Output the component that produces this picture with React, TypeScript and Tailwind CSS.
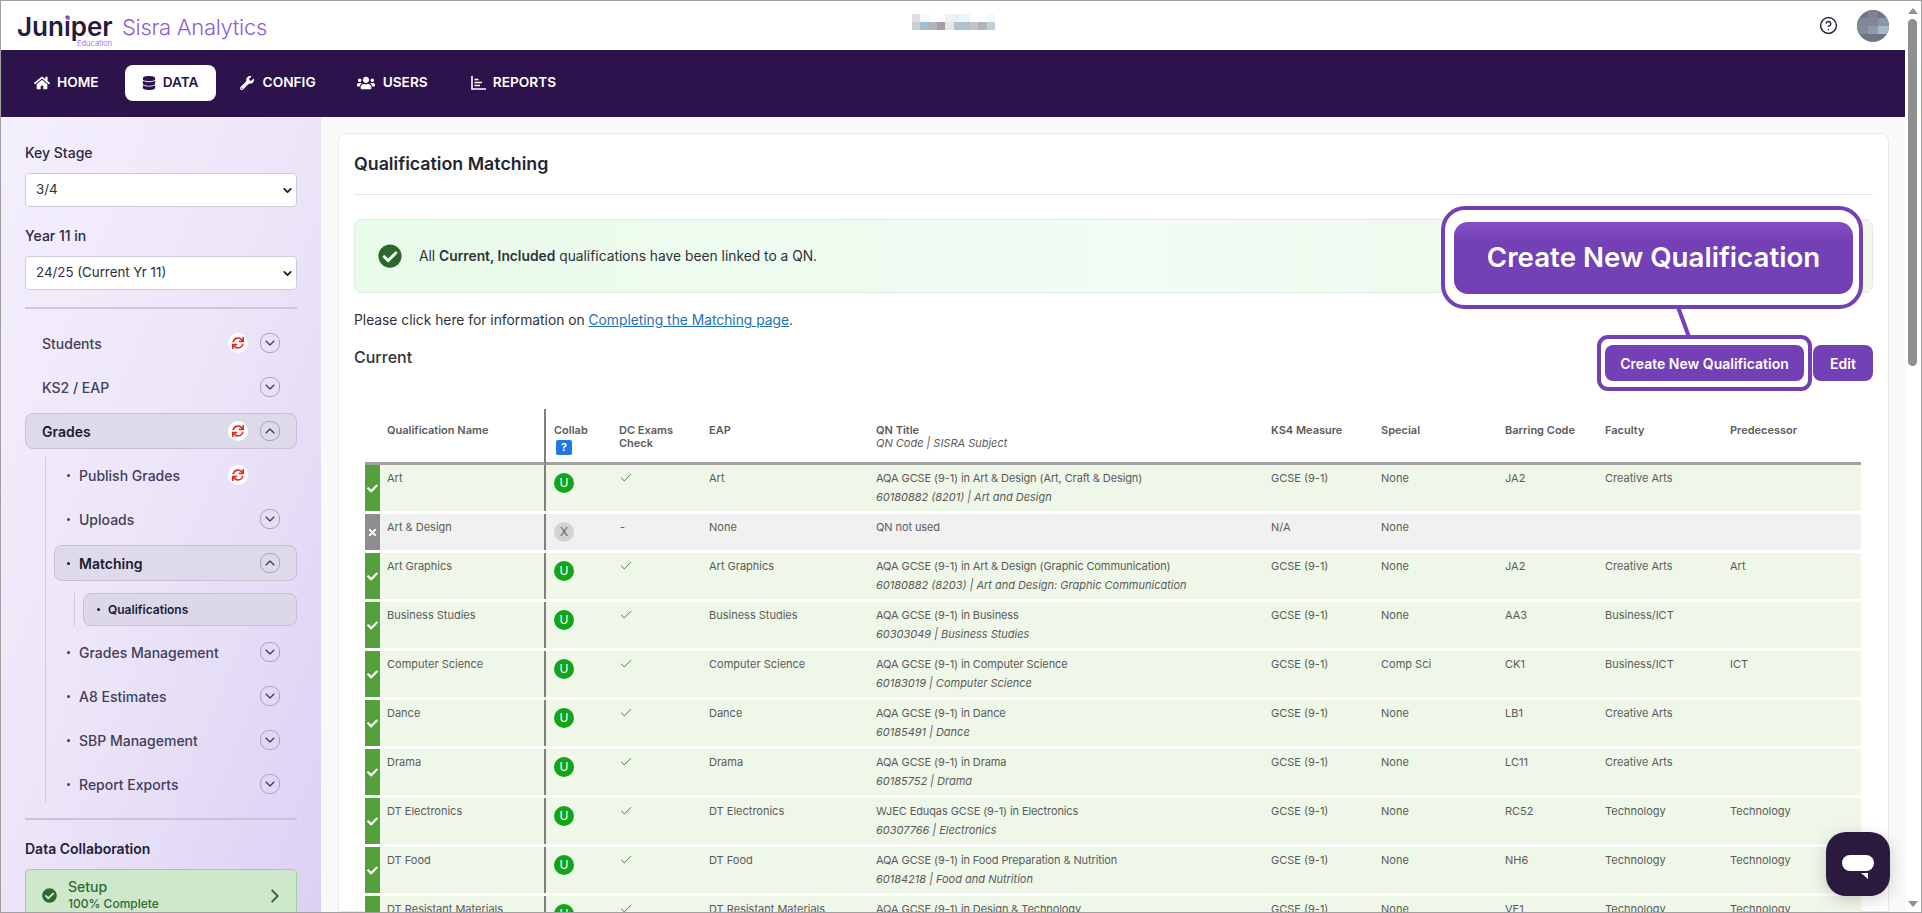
import React from "react";
import { FaHome, FaDatabase, FaWrench, FaUsers, FaSync, FaCheckCircle, FaCheck, FaTimes } from "react-icons/fa";
import { ChevronDown, ChevronUp, ChevronRight, CircleHelp, Check } from "lucide-react";

type RowData = { name: string; st: "U" | "X"; eap: string; t1: string; t2?: string; m: string; sp: string; bar?: string; fac?: string; pre?: string };

const rows: RowData[] = [
  { name: "Art", st: "U", eap: "Art", t1: "AQA GCSE (9-1) in Art & Design (Art, Craft & Design)", t2: "60180882 (8201) | Art and Design", m: "GCSE (9-1)", sp: "None", bar: "JA2", fac: "Creative Arts" },
  { name: "Art & Design", st: "X", eap: "None", t1: "QN not used", m: "N/A", sp: "None" },
  { name: "Art Graphics", st: "U", eap: "Art Graphics", t1: "AQA GCSE (9-1) in Art & Design (Graphic Communication)", t2: "60180882 (8203) | Art and Design: Graphic Communication", m: "GCSE (9-1)", sp: "None", bar: "JA2", fac: "Creative Arts", pre: "Art" },
  { name: "Business Studies", st: "U", eap: "Business Studies", t1: "AQA GCSE (9-1) in Business", t2: "60303049 | Business Studies", m: "GCSE (9-1)", sp: "None", bar: "AA3", fac: "Business/ICT" },
  { name: "Computer Science", st: "U", eap: "Computer Science", t1: "AQA GCSE (9-1) in Computer Science", t2: "60183019 | Computer Science", m: "GCSE (9-1)", sp: "Comp Sci", bar: "CK1", fac: "Business/ICT", pre: "ICT" },
  { name: "Dance", st: "U", eap: "Dance", t1: "AQA GCSE (9-1) in Dance", t2: "60185491 | Dance", m: "GCSE (9-1)", sp: "None", bar: "LB1", fac: "Creative Arts" },
  { name: "Drama", st: "U", eap: "Drama", t1: "AQA GCSE (9-1) in Drama", t2: "60185752 | Drama", m: "GCSE (9-1)", sp: "None", bar: "LC11", fac: "Creative Arts" },
  { name: "DT Electronics", st: "U", eap: "DT Electronics", t1: "WJEC Eduqas GCSE (9-1) in Electronics", t2: "60307766 | Electronics", m: "GCSE (9-1)", sp: "None", bar: "RC52", fac: "Technology", pre: "Technology" },
  { name: "DT Food", st: "U", eap: "DT Food", t1: "AQA GCSE (9-1) in Food Preparation & Nutrition", t2: "60184218 | Food and Nutrition", m: "GCSE (9-1)", sp: "None", bar: "NH6", fac: "Technology", pre: "Technology" },
  { name: "DT Resistant Materials", st: "U", eap: "DT Resistant Materials", t1: "AQA GCSE (9-1) in Design & Technology", m: "GCSE (9-1)", sp: "None", bar: "VE1", fac: "Technology", pre: "Technology" },
];

function Sync() {
  return (
    <span className="flex h-5 w-5 items-center justify-center rounded-full bg-white">
      <FaSync className="text-[12px] text-[#e02b20]" />
    </span>
  );
}

function Toggle({ up }: { up?: boolean }) {
  return (
    <span className="flex h-5 w-5 items-center justify-center rounded-[9px] border border-[#aaa4be] text-[#33314a]">
      {up ? <ChevronUp size={16} strokeWidth={1.6} /> : <ChevronDown size={16} strokeWidth={1.6} />}
    </span>
  );
}

function SideRow({ label, bullet, sync, toggle, active, up }: { label: string; bullet?: boolean; sync?: boolean; toggle?: boolean; active?: boolean; up?: boolean }) {
  return (
    <div className={`flex h-9 items-center rounded-lg border pr-[16px] ${bullet ? "pl-[12px]" : "pl-[16px]"} ${active ? "border-[#c6c1d6] bg-[#dfdaea] font-semibold text-[#1d1b34]" : "border-transparent font-medium text-[#41405a]"}`}>
      {bullet && <span className="mr-[9px] h-[3px] w-[3px] rounded-full bg-current" />}
      <span className="text-[14px]">{label}</span>
      <span className="ml-auto flex items-center gap-3">
        {sync && <Sync />}
        {toggle ? <Toggle up={up} /> : <span className="h-5 w-5" />}
      </span>
    </div>
  );
}

function Select({ value }: { value: string }) {
  return (
    <div className="mt-[11px] flex h-[34px] items-center justify-between rounded border border-[#cfcbdc] bg-white pl-[10px] pr-[2px] text-[13.3px] text-[#2f2f3a]">
      <span>{value}</span>
      <ChevronDown size={13} strokeWidth={3.4} className="text-[#222]" />
    </div>
  );
}

function Sidebar() {
  return (
    <aside className="h-full w-[320px] shrink-0 overflow-hidden bg-gradient-to-br from-[#f4effd] via-[#ece5f8] to-[#dcd0f4] px-6 pt-[27px]">
      <div className="text-[14px] font-medium leading-[18px] text-[#2b2a40]">Key Stage</div>
      <Select value="3/4" />
      <div className="mt-[20px] text-[14px] font-medium leading-[18px] text-[#2b2a40]">Year 11 in</div>
      <Select value="24/25 (Current Yr 11)" />
      <div className="mt-[17px] h-[2px] bg-[#cdc8da]" />
      <div className="mt-[16px] flex flex-col gap-2">
        <SideRow label="Students" sync toggle />
        <SideRow label="KS2 / EAP" toggle />
        <SideRow label="Grades" sync toggle active up />
      </div>
      <div className="ml-[20px] mt-2 flex flex-col gap-2 border-l border-[#cfcbdc] pl-[8px]">
        <SideRow label="Publish Grades" bullet sync />
        <SideRow label="Uploads" bullet toggle />
        <SideRow label="Matching" bullet toggle active up />
        <div className="ml-[20px] mt-[4px] border-l border-[#cfcbdc] pl-[8px]">
          <div className="flex h-[33px] items-center rounded-lg border border-[#c6c1d6] bg-[#dcd8e9] pl-[13px] text-[12px] font-semibold text-[#1d1b34]">
            <span className="mr-[8px] h-[3px] w-[3px] rounded-full bg-current" />
            Qualifications
          </div>
        </div>
        <SideRow label="Grades Management" bullet toggle />
        <SideRow label="A8 Estimates" bullet toggle />
        <SideRow label="SBP Management" bullet toggle />
        <SideRow label="Report Exports" bullet toggle />
      </div>
      <div className="mt-[16px] h-[2px] bg-[#c9c3d8]" />
      <div className="mt-[20px] text-[14px] font-semibold leading-[18px] text-[#23223a]">Data Collaboration</div>
      <div className="mt-[11px] flex h-[60px] items-start rounded border border-[#9fd09c] bg-[#cfe8cb] pl-[16px] pr-[10px] pt-[8px] text-[#2e6b30]">
        <FaCheckCircle className="mt-[10px] text-[15px]" />
        <div className="ml-[11px] leading-none">
          <div className="text-[14px] font-medium leading-[18px]">Setup</div>
          <div className="text-[12px] font-medium leading-[16px]">100% Complete</div>
        </div>
        <ChevronRight size={22} strokeWidth={2} className="ml-auto mt-[7px]" />
      </div>
    </aside>
  );
}

function NavItem({ icon, label, active, gap }: { icon: React.ReactNode; label: string; active?: boolean; gap: string }) {
  return (
    <div className={`flex h-9 items-center ${gap} rounded-lg px-[17px] text-[13.7px] font-semibold ${active ? "bg-white text-[#2c134c]" : "text-white"}`}>
      {icon}
      {label}
    </div>
  );
}

function Logo() {
  return (
    <div className="flex items-start pl-4 pt-[2px]">
      <div className="relative w-[98px]">
        <span className="text-[26px] font-semibold leading-[36px] text-[#2a1a3e]">Juniper</span>
        <span className="absolute left-[49px] top-[7px] h-[4px] w-[4px] rounded-full bg-[#8e5cd9]" />
        <span className="absolute left-[60px] top-[30px] text-[7.5px] leading-[10px] text-[#a678ee]">Education</span>
      </div>
      <span className="ml-[7px] text-[22px] font-light leading-[36px] tracking-[-0.3px] text-[#8e5cd9]">Sisra Analytics</span>
    </div>
  );
}

function BlurredName() {
  return (
    <div className="absolute left-[911px] top-[13px] grid h-[16px] w-[83px] grid-cols-10 grid-rows-2">
      <span className="bg-[#dedfe2]" />
      <span className="bg-[#f3f8fd]" />
      <span />
      <span />
      <span className="bg-[#f0f0f2]" />
      <span className="bg-[#f0f0f2]" />
      <span className="bg-[#edf4fb]" />
      <span />
      <span />
      <span className="bg-[#f5f8fc]" />
      <span className="bg-[#cdd0d3]" />
      <span className="bg-[#a0bfd4]" />
      <span className="bg-[#b5b5b8]" />
      <span className="bg-[#a29fa8]" />
      <span className="bg-[#e4e6ec]" />
      <span className="bg-[#b4bfd0]" />
      <span className="bg-[#aec0d0]" />
      <span className="bg-[#c3c5c2]" />
      <span className="bg-[#b4b4bc]" />
      <span className="bg-[#c0ced8]" />
    </div>
  );
}

function TopBar() {
  return (
    <header className="relative flex h-[49px] items-center justify-between bg-white pr-[16px]">
      <Logo />
      <BlurredName />
      <div className="flex items-center gap-[19px]">
        <CircleHelp size={19} strokeWidth={1.8} className="text-[#22223a]" />
        <div className="grid h-[32px] w-[32px] grid-cols-3 grid-rows-4 overflow-hidden rounded-full bg-[#6f7686]">
          <span />
          <span className="bg-[#7f8392]" />
          <span />
          <span className="bg-[#7f8798]" />
          <span className="bg-[#868592]" />
          <span className="bg-[#8b97a8]" />
          <span className="bg-[#838a9c]" />
          <span className="bg-[#8f9aac]" />
          <span className="bg-[#a4bac9]" />
        </div>
      </div>
    </header>
  );
}

function NavBar() {
  return (
    <nav className="flex h-[67px] items-center bg-[#2c134c] pb-[2px] pl-[16px] shadow-[0_2px_6px_rgba(0,0,0,0.18)]">
      <NavItem gap="gap-[7px]" icon={<FaHome className="text-[16px]" />} label="HOME" />
      <div className="w-[9px]" />
      <NavItem gap="gap-[7px]" icon={<FaDatabase className="text-[14px]" />} label="DATA" active />
      <div className="w-[7px]" />
      <NavItem gap="gap-[9px]" icon={<FaWrench className="text-[14px]" />} label="CONFIG" />
      <div className="w-[7px]" />
      <NavItem gap="gap-[8px]" icon={<FaUsers className="text-[18px]" />} label="USERS" />
      <div className="w-[9px]" />
      <NavItem
        gap="gap-[7px]"
        icon={
          <svg width="15" height="14" viewBox="0 0 15 14" fill="none" stroke="currentColor" strokeWidth="1.6">
            <path d="M1 0v13h14" />
            <path d="M3.5 3.5h4M3.5 6.5h7.5M3.5 9.5h5.5" />
          </svg>
        }
        label="REPORTS"
      />
    </nav>
  );
}

function StatusCell({ st }: { st: "U" | "X" }) {
  return (
    <td className={`p-0 align-middle text-white ${st === "U" ? "bg-[#54a03c]" : "bg-[#8e8e8e]"}`}>
      <div className="flex justify-center">{st === "U" ? <FaCheck className="text-[11px]" /> : <FaTimes className="text-[11px]" />}</div>
    </td>
  );
}

function Row({ r }: { r: RowData }) {
  const bg = r.st === "U" ? "bg-[#eef7e8]" : "bg-[#f1f1f1]";
  const cell = `px-[7px] pt-[5px] align-top ${bg}`;
  return (
    <tr className={r.st === "U" ? "h-[46px]" : "h-[36px]"}>
      <StatusCell st={r.st} />
      <td className={`${cell} border-r-2 border-[#808080]`}>{r.name}</td>
      <td className={`${bg} px-[8px] pt-[8px] align-top`}>
        <span className={`flex h-5 w-5 items-center justify-center rounded-full text-[12px] ${r.st === "U" ? "bg-[#13a31c] text-white" : "bg-[#d2d2d2] text-[#666]"}`}>{r.st}</span>
      </td>
      <td className={cell}>{r.st === "U" ? <Check size={14} strokeWidth={1.5} className="mt-[1px] text-[#2f6b33]" /> : <span className="pl-[1px]">-</span>}</td>
      <td className={cell}>{r.eap}</td>
      <td className={cell}>
        <div className="tracking-[-0.1px]">{r.t1}</div>
        {r.t2 && <div className="mt-[3px] italic">{r.t2}</div>}
      </td>
      <td className={cell}>{r.m}</td>
      <td className={cell}>{r.sp}</td>
      <td className={cell}>{r.bar}</td>
      <td className={cell}>{r.fac}</td>
      <td className={cell}>{r.pre}</td>
    </tr>
  );
}

function QualTable() {
  const th = "border-b-[3px] border-[#a0a0a0] bg-white px-[7px] pt-[15px] text-left align-top font-semibold";
  return (
    <table className="w-[1496px] table-fixed border-separate border-spacing-0 text-[11px] leading-[16px] text-[#5b5b5b]">
      <colgroup>
        <col className="w-[15px]" />
        <col className="w-[166px]" />
        <col className="w-[66px]" />
        <col className="w-[90px]" />
        <col className="w-[167px]" />
        <col className="w-[395px]" />
        <col className="w-[110px]" />
        <col className="w-[124px]" />
        <col className="w-[100px]" />
        <col className="w-[125px]" />
        <col className="w-[138px]" />
      </colgroup>
      <thead className="leading-[13px]">
        <tr className="h-[56px]">
          <th className={th} />
          <th className={`${th} border-r-2 border-r-[#808080]`}>Qualification Name</th>
          <th className={`${th} pl-[8px]`}>
            Collab
            <span className="ml-[2px] mt-[3px] flex h-[15px] w-[16px] items-center justify-center rounded-[2px] bg-[#1f78e0] text-[11px] leading-none text-white">?</span>
          </th>
          <th className={th}>DC Exams Check</th>
          <th className={th}>EAP</th>
          <th className={th}>
            QN Title
            <div className="font-normal italic">QN Code | SISRA Subject</div>
          </th>
          <th className={th}>KS4 Measure</th>
          <th className={th}>Special</th>
          <th className={th}>Barring Code</th>
          <th className={th}>Faculty</th>
          <th className={th}>Predecessor</th>
        </tr>
      </thead>
      <tbody>
        {rows.map((r) => (
          <React.Fragment key={r.name}>
            <Row r={r} />
            <tr className="h-[3px]">
              <td colSpan={11} className="p-0" />
            </tr>
          </React.Fragment>
        ))}
      </tbody>
    </table>
  );
}

function Callout() {
  return (
    <>
      <div className="absolute left-[1102px] top-[72px] flex h-[103px] w-[422px] items-center justify-center rounded-[24px] border-[4px] border-[#7440b5] bg-white">
        <div className="ml-[3px] flex h-[72px] w-[399px] items-center justify-center rounded-[14px] bg-gradient-to-b from-[#854dc6] to-[#7340b5] to-30% text-[27.7px] font-semibold text-white">
          Create New Qualification
        </div>
      </div>
      <svg className="absolute left-[1335px] top-[172px]" width="20" height="32" viewBox="0 0 20 32">
        <path d="M4 1l11 30" stroke="#7440b5" strokeWidth="4" fill="none" />
      </svg>
    </>
  );
}

function Card() {
  return (
    <section className="relative mt-[16px] ml-[17px] mr-[16px] flex-1 rounded-t-lg border border-[#eaeaee] bg-white px-[15px]">
      <h1 className="flex h-[60px] items-center text-[17.8px] font-semibold text-[#23272f]">Qualification Matching</h1>
      <div className="h-px bg-[#e4e4e8]" />
      <div className="mt-[24px] flex h-[74px] items-center rounded-lg border border-[#e1eae1] bg-gradient-to-r from-[#e9fbe9] via-[#f1fcf3] to-[#f1f8ea] pl-[23px] text-[13.8px] text-[#2f3338]">
        <FaCheckCircle className="text-[24px] text-[#2e6630]" />
        <span className="ml-[17px]">
          All <b className="font-semibold">Current, Included</b> qualifications have been linked to a QN.
        </span>
      </div>
      <p className="mt-[17px] text-[13.8px] leading-[20px] text-[#2f3338]">
        Please click here for information on <span className="text-[#1f6fb8] underline">Completing the Matching page</span>.
      </p>
      <div className="mt-[5px] flex h-[56px] items-start justify-between">
        <div className="mt-[10px] text-[16px] font-medium leading-[24px] text-[#2f3338]">Current</div>
        <div className="flex items-center gap-[1px]">
          <div className="flex h-[56px] w-[215px] items-center justify-center rounded-[11px] border-[4px] border-[#7440b5] bg-white">
            <div className="flex h-[36px] w-[199px] items-center justify-center rounded-lg bg-[#7340b5] text-[14px] font-semibold text-white">Create New Qualification</div>
          </div>
          <div className="flex h-[36px] w-[60px] items-center justify-center rounded-lg bg-[#7340b5] text-[14px] font-semibold text-white">Edit</div>
        </div>
      </div>
      <div className="ml-[11px] mt-[18px]">
        <QualTable />
      </div>
      <Callout />
    </section>
  );
}

function Scrollbar() {
  return (
    <div className="relative h-full w-[16px] shrink-0 bg-white">
      <span className="absolute left-[3px] top-[7px] h-0 w-0 border-x-[5px] border-b-[6px] border-x-transparent border-b-[#8f8f8f]" />
      <span className="absolute left-[3px] top-[18px] h-[347px] w-[9px] rounded-full bg-[#8f8f8f]" />
      <span className="absolute bottom-[5px] left-[3px] h-0 w-0 border-x-[5px] border-t-[6px] border-x-transparent border-t-[#8f8f8f]" />
    </div>
  );
}

function ChatWidget() {
  return (
    <div className="absolute left-[1825px] top-[831px] flex h-16 w-16 items-center justify-center rounded-[20px] bg-[#2a1a3e] shadow-[0_4px_16px_rgba(0,0,0,0.18)]">
      <div className="relative mb-[2px] h-4 w-8 rounded-full bg-white">
        <svg className="absolute left-[19px] top-[18px]" width="7" height="6" viewBox="0 0 7 6">
          <path d="M0 0h7v6z" fill="#fff" />
        </svg>
      </div>
    </div>
  );
}

export default function App() {
  return (
    <div className="relative h-[913px] w-[1922px] overflow-hidden border border-[#a0a0a0] bg-white [font-family:Inter,'Liberation_Sans',sans-serif]">
      <div className="flex h-full">
        <div className="flex h-full w-[1905px] flex-col">
          <TopBar />
          <NavBar />
          <div className="flex min-h-0 flex-1 bg-[#f9f9f9]">
            <Sidebar />
            <main className="flex min-w-0 flex-1 overflow-hidden">
              <Card />
            </main>
          </div>
        </div>
        <Scrollbar />
      </div>
      <ChatWidget />
    </div>
  );
}
